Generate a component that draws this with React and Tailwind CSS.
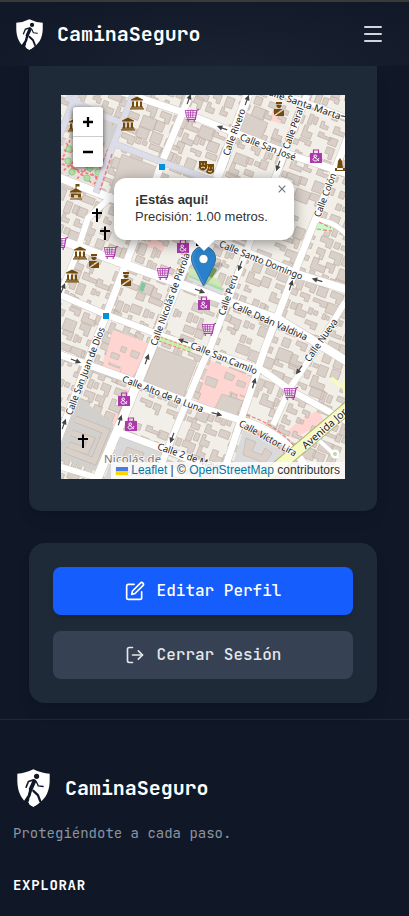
import React from "react";
import { FiEdit, FiLogOut } from "react-icons/fi";
import { Menu } from "lucide-react";

function Logo({ className }) {
  return (
    <svg viewBox="50 177 101 115" preserveAspectRatio="none" className={className}>
      <path fill="#fff" d="M100 178Q76 190 51 191L51 215C52 245 62 264 76 277L88 262L87 284Q93 289 100 291Q107 288 114 283L121 277C138 265 149 245 150 215L150 191Q124 190 100 178Z" />
      <g fill="none" stroke="#101828" strokeLinecap="round" strokeLinejoin="round">
        <circle cx="110" cy="199" r="4" strokeWidth="8" />
        <path d="M103 214L92 238" strokeWidth="12" />
        <path d="M101 210L85 215L78 232" strokeWidth="5" />
        <path d="M109 215L115 228L130 230" strokeWidth="4" />
        <path d="M92 240L87 258L75 276" strokeWidth="9" />
        <path d="M76 277L66 283" strokeWidth="4" />
        <path d="M100 243L114 256L121 274" strokeWidth="7" />
      </g>
      <path fill="#fff" d="M101 252L84 278Q92 287 100 291Q109 288 117 280Q112 262 101 252Z" />
    </svg>
  );
}

function makeBuildings() {
  let seed = 41;
  const rnd = () => {
    seed = (seed * 16807) % 2147483647;
    return seed / 2147483647;
  };
  const list = [];
  for (let r = -12; r < 36; r++) {
    for (let c = -4; c < 34; c++) {
      const a = rnd(), b = rnd(), d = rnd(), e = rnd(), k = rnd();
      if (k < 0.1) continue;
      const x = c * 14 + a * 3;
      const y = r * 12 + b * 3;
      const w = 7 + d * 8;
      const h = 5 + e * 7;
      if (k > 0.75) {
        list.push(`M${x} ${y}h${w}v${h}h${-w * 0.45}v${-h * 0.4}h${-w * 0.55}z`);
      } else if (k > 0.5) {
        list.push(`M${x} ${y}h${w * 0.4}v${h * 0.45}h${w * 0.6}v${h * 0.55}h${-w}z`);
      } else if (k > 0.35) {
        list.push(`M${x} ${y}h${w * 0.45}v${h}h${-w * 0.45}zM${x + w * 0.6} ${y + 1}h${w * 0.4}v${h * 0.7}h${-w * 0.4}z`);
      } else {
        list.push(`M${x} ${y}h${w}v${h}h${-w}z`);
      }
    }
  }
  return list.join("");
}
const BUILDINGS = makeBuildings();

const ROADS = [
  ["M248 95L217 178L193 245L152 347L127 408L97 479", 9],
  ["M190 95L162 162L133 245L107 313L92 350L75 395L58 440", 7],
  ["M307 95L275 178L250 242L210 348L202 365L165 455L156 479", 6.5],
  ["M350 132L315 220L265 348L225 468L221 479", 7],
  ["M345 302L317 348L290 388L273 425", 6],
  ["M122 92L182 112L220 127L297 157L348 174", 7],
  ["M58 177L98 193L150 213L217 240L300 275L348 290", 8],
  ["M58 239L127 265L175 282L205 293L280 320L348 362", 8.5],
  ["M58 294L107 315L165 337L240 362L262 370L290 390L348 422", 6.5],
  ["M58 354L125 378L203 408L240 420Q275 428 300 458L312 475", 7],
  ["M118 432L172 452L236 480", 7],
  ["M58 466L98 478", 6],
  ["M268 90L300 100L348 118", 5],
  ["M315 220Q333 220 347 235", 5],
  ["M311 433L335 455", 4],
  ["M113 195L88 218L75 258L61 292", 6],
];
const PLAZA_ROADS = ["M76 95L58 140", "M133 95L115 140L96 193", "M66 97L98 114L122 123", "M115 144L162 162L205 178L240 190", "M190 277L223 292"];

const LABELS = [
  ["Calle Santa Marta", 302, 103, 19, 82],
  ["Calle Rivero", 234, 132, -70, 49],
  ["Calle Peral", 293, 128, -70, 44],
  ["Calle San José", 268, 147, 21, 59],
  ["Calle Colón", 325, 195, -69, 46],
  ["Calle Santo Domingo", 261, 260, 22, 89],
  ["Calle Perú", 228, 295, -71, 42],
  ["Calle Deán Valdivia", 270, 321, 24, 81],
  ["Calle Nicolás de Piérola", 170, 299, -70, 98],
  ["Calle San Juan de Dios", 85, 371, -69, 93],
  ["Calle San Camilo", 224, 358, 22, 71],
  ["Calle Alto de la Luna", 163, 394, 21, 86],
  ["Calle 2 de Mayo", 190, 457, 19, 68],
  ["Calle Nueva", 321, 340, -55, 50],
];

const ARROWS = [
  [247, 100, -70], [189, 99, -70], [222, 128, 200], [278, 166, 110], [346, 117, 15],
  [240, 266, 110], [317, 280, 197], [291, 285, -72], [200, 291, 22], [183, 341, 200],
  [63, 288, -68], [76, 361, 22], [147, 359, -70], [120, 420, -72], [64, 424, -70],
  [172, 438, 110], [254, 383, -74], [299, 370, 125], [217, 414, 15],
];

function Museum({ x, y }) {
  return (
    <g transform={`translate(${x - 7} ${y - 6.5})`} fill="#734a08">
      <path d="M7 0L13 3V4H1V3ZM2 5h2v5H2zM6 5h2v5H6zM10 5h2v5h-2zM1 10h12v1.3H1zM0 11.7h14V13H0z" />
    </g>
  );
}
function Cart({ x, y }) {
  return (
    <g transform={`translate(${x - 7} ${y - 6})`}>
      <path d="M0 1.5H11.5L10.300 8.500H1.500Z" fill="#fff" opacity=".6" />
      <g fill="none" stroke="#ac39ac" strokeWidth=".8">
        <path d="M0 1.500H12M.5 3.800H11.500M1 6.100H11M1.500 8.400H10.500M.3 1.500L1.600 8.400M3 1.500L3.500 8.400M5.500 1.500V8.400M8 1.500L7.700 8.400" />
        <path d="M14 .3L12 1.200L10.300 10.300H1.500" strokeWidth="1.200" />
        <path d="M2.500 12h1.500M8.500 12h1.500" strokeWidth="1.500" />
      </g>
    </g>
  );
}
function Bag({ x, y }) {
  return (
    <g transform={`translate(${x} ${y})`}>
      <path d="M-2.5 -2.5V-6H2.5V-2.5" fill="none" stroke="#ac39ac" strokeWidth="1.2" />
      <path d="M-6 -3H6V7H-6Z" fill="#ac39ac" />
      <circle cx="-.8" cy=".2" r="1.3" fill="none" stroke="#fff" />
      <path d="M-.5 1.5C-4 2-3.5 5-.8 5C1 5 2 4 3 2M-1.5 1L3 5" fill="none" stroke="#fff" />
    </g>
  );
}
function Officer({ x, y }) {
  return (
    <g transform={`translate(${x} ${y})`} fill="#734a08">
      <path d="M-3 -7H3V-5H-3ZM-2.500 -4.200H2.500V-2.500Q0 .8-2.500-2.500ZM-5 0H3.500L-5 6ZM5 1V7H-4Z" />
    </g>
  );
}
function Cross({ x, y }) {
  return <path d={`M${x} ${y - 6.5}V${y + 7}M${x - 5} ${y - 2}H${x + 5}`} stroke="#000" strokeWidth="2" />;
}

function MapTiles() {
  return (
    <svg viewBox="61 95 284 384" className="block h-[384px] w-[284px]" style={{ fontFamily: '"Noto Sans", sans-serif' }}>
      <rect x="61" y="95" width="284" height="384" fill="#f2efe9" />
      <g fill="#ffd5d1">
        <path d="M112 329L148 343L131 384L100 372Z" />
        <path d="M208 361L253 378L240 420L196 402Z" />
        <path d="M300 420L318 410L325 422L295 438L283 435Z" />
        <path d="M125 388L130 390L118 425L111 422Z" />
        <path d="M152 238L166 242L163 252L142 245Z" />
        <path d="M274 108L285 111L281 124L269 120Z" />
      </g>
      <g transform="translate(61 95) rotate(21)">
        <path d={BUILDINGS} fill="#d9d0c9" stroke="#c2b3a9" strokeWidth=".7" />
      </g>
      <g fill="#d9d0c9" stroke="#c2b3a9" strokeWidth=".6">
        <path d="M157 347L197 362L183 398L143 384Z" />
        <path d="M122 154L157 167L148 205L108 197Z" />
        <path d="M246 113L268 123L258 146L237 137Z" />
      </g>
      <g fill="#ffd5d1">
        <path d="M113 330L148 343L142 358L136 372L128 382L119 378L122 367L105 360Z" />
        <path d="M211 361L252 377L246 396L230 391L224 413L199 403L207 385L202 382Z" />
      </g>
      <g fill="#d9d0c9" stroke="#c2b3a9" strokeWidth=".6">
        <path d="M222 394L243 401L236 417L214 410ZM207 376L218 380L215 388L205 384ZM132 350L140 353L137 359L130 356ZM122 346L127 348L125 353L120 351ZM226 372L235 376L232 381L224 378ZM112 352L120 355L118 360L110 357ZM238 380L246 383L244 388L236 385Z" />
      </g>
      <path d="M77 396L114 424L98 472L61 458V436Z" fill="#d1d0cd" />
      <g fill="none" stroke="#c2b3a9" strokeWidth="7">
        <path d="M75 419L106 431L94 461L65 450M72 433L91 440L86 451L69 445" />
      </g>
      <g fill="none" stroke="#d9d0c9" strokeWidth="5.8">
        <path d="M75 419L106 431L94 461L65 450M72 433L91 440L86 451L69 445" />
      </g>
      <path d="M121 435L168 452L155 479H104Z" fill="#d8d8d8" />
      <path d="M244 428Q270 437 288 456L268 473H230Z" fill="#dadada" />
      <path d="M246 438L256 442L252 451L262 455L265 448L272 453L265 463L243 455ZM127 447L144 453L140 464L123 458Z" fill="#d9d0c9" stroke="#c2b3a9" strokeWidth=".6" />
      <path d="M66 138L107 148L95 186L61 173V151Z" fill="#e5e1dc" />
      <path d="M104 122L117 127L110 144L97 139Z" fill="#cfd0cf" />
      <g stroke="#f87974" strokeWidth="1.6" strokeDasharray="3 2" fill="none">
        <path d="M66 143L101 184M62 158L93 184M76 141L104 172M92 145L62 172M103 151L75 181M108 149L93 188M64 150L104 162M62 164L100 178M70 140L62 160M84 144L68 176" />
      </g>
      <g fill="#aedfa3" stroke="#83bb7c" strokeWidth=".6">
        {[[69, 149], [79, 145], [91, 150], [98, 158], [68, 161], [79, 160], [90, 168], [72, 172], [87, 178], [98, 172]].map(([x, y]) => (
          <circle key={`${x}-${y}`} cx={x} cy={y} r="3.2" />
        ))}
      </g>
      <path d="M142 282L146 284L143 292L139 290Z" fill="#7fc8a2" />
      <path d="M318 221L336 225L331 232L315 230Z" fill="#c8facc" />
      <path d="M190 268L218 279L224 291L188 279Z" fill="#cdebb0" />
      <path d="M214 267L217 270L212 278L207 275Z" fill="#8db56e" />
      <g fill="none" stroke="#cfc8c2" strokeLinejoin="round">
        {ROADS.map(([d, w]) => <path key={d} d={d} strokeWidth={w + 1} />)}
      </g>
      <g fill="none" stroke="#fff" strokeLinejoin="round">
        {ROADS.map(([d, w]) => <path key={d} d={d} strokeWidth={w} />)}
      </g>
      <g fill="none" stroke="#c8c7d0" strokeLinejoin="round">
        {PLAZA_ROADS.map((d) => <path key={d} d={d} strokeWidth="7" />)}
      </g>
      <g fill="none" stroke="#dddde8" strokeLinejoin="round">
        {PLAZA_ROADS.map((d) => <path key={d} d={d} strokeWidth="6" />)}
      </g>
      <path d="M112 154L100 190" stroke="#f87974" strokeWidth="1.5" strokeDasharray="4 2" />
      <path d="M189 276L223 290" stroke="#a6e09a" strokeWidth="2" />
      <path d="M159 338L192 350" stroke="#c8efb0" strokeWidth="5" />
      <path d="M160 337L193 349M159 341L190 352" stroke="#f87974" strokeDasharray="3 2" />
      <path d="M246 415Q275 423 297 449M240 427Q265 434 287 455M317 229L332 231M319 222L331 228" fill="none" stroke="#f87974" strokeDasharray="4 2" strokeWidth="1.2" />
      <path d="M350 406L260 482" stroke="#aab36a" strokeWidth="13" />
      <path d="M350 406L260 482" stroke="#f7fabf" strokeWidth="11" />
      <path d="M331 378L347 390M345 378V396" stroke="#f7fabf" strokeWidth="4" />
      <circle cx="335" cy="454" r="4.5" fill="#fff" />
      <circle cx="335" cy="454" r="2" fill="#b8d8a8" />
      <g fill="none" stroke="#444" strokeWidth="1.2">
        {ARROWS.map(([x, y, a]) => (
          <g key={`${x}-${y}`} transform={`translate(${x} ${y}) rotate(${a})`}>
            <path d="M-5.5 0H2" />
            <path d="M5.5 0L0 -2.6V2.6Z" fill="#444" stroke="none" />
          </g>
        ))}
      </g>
      <Museum x={137} y={103} />
      <Museum x={128} y={124} />
      <Museum x={75} y={125} />
      <Museum x={80} y={253} />
      <Museum x={72} y={276} />
      <g fill="#734a08">
        <path d="M75.500 184h4v2.500h-3v2l5 3v1H70v-1l5.500-3ZM71 193.500h10v4h-3v-2.500h-4v2.500h-3zM70 198.500h12v1H70zM337 170h6v-1l-1-8-2-3-2 3-1 8ZM335 168h10v3h-10Z" />
        <path d="M199 161h8v7q-4 5-8 0ZM207 164h7v8q-4 4-8 0l2-4Z" />
        <path d="M201 164h1M204 164h1M201 168q2-2 4 0M209 168h1M212 168h1M208 171q2 2 4 0" stroke="#f2efe9" fill="none" />
      </g>
      {[[192, 115], [61, 243], [111, 252], [164, 273], [209, 329], [291, 393]].map(([x, y]) => <Cart key={x} x={x} y={y} />)}
      {[[316, 156], [183, 246], [204, 303], [124, 399], [131, 424]].map(([x, y]) => <Bag key={x} x={x} y={y} />)}
      <Officer x={279} y={109} />
      <Officer x={94} y={261} />
      <Officer x={126} y={279} />
      <Cross x={97} y={215} />
      <Cross x={105} y={233} />
      <Cross x={83} y={441} />
      <path d="M159 164h6v6h-6zM103 313h6v6h-6z" fill="#0092da" />
      <path d="M196 246h7v-3h-7z" fill="#000" />
      <g fontSize="9.6" fill="#222" stroke="#fff" strokeWidth="2" strokeOpacity=".75" strokeLinejoin="round" paintOrder="stroke" textAnchor="middle">
        {LABELS.map(([t, x, y, a, w]) => (
          <text key={t} transform={`translate(${x} ${y}) rotate(${a})`} y="3.5" textLength={w} lengthAdjust="spacingAndGlyphs">{t}</text>
        ))}
        <text transform="translate(268 438) rotate(29)" y="3.5" textLength="64" lengthAdjust="spacingAndGlyphs">Calle Víctor Lira</text>
        <text textAnchor="start" transform="translate(305 449) rotate(-41)" y="1" fontSize="10.5">Avenida Jorge</text>
      </g>
      <g fontSize="11.3" fill="#777" stroke="#fff" strokeWidth="2" strokeOpacity=".8" paintOrder="stroke" textAnchor="middle">
        <text x="132.500" y="463" textLength="57">Nicolás de</text>
        <text x="132.500" y="476">Piérola</text>
      </g>
    </svg>
  );
}

function MapPanel() {
  return (
    <div className="relative h-[384px] w-[284px] overflow-hidden font-['Liberation_Sans',sans-serif]">
      <MapTiles />
      <svg viewBox="0 0 25 41" className="absolute left-[130px] top-[151px] h-[41px] w-[25px] overflow-visible">
        <path d="M13 41L30 22Q34 17 28 16L19 20Z" fill="#000" opacity=".18" />
        <path d="M12.500 .5C5.500 .5 .5 5.500 .5 12.500C.5 16 2 19.500 4 23L12.500 40L21 23C23 19.500 24.500 16 24.500 12.500C24.500 5.500 19.500 .5 12.500 .5Z" fill="#2a81cb" stroke="#2e6c97" />
        <path d="M12.500 1.700C6.200 1.700 1.700 6.200 1.700 12.500C1.700 16 3 19 5 22.500L12.500 37.500" fill="none" stroke="#5aa0da" opacity=".7" />
        <circle cx="12.500" cy="13" r="4.600" fill="#fff" stroke="#2e6c97" strokeWidth=".8" />
      </svg>
      <div className="absolute left-3 top-3 flex w-[30px] flex-col overflow-hidden rounded-[3px] shadow-[0_1px_5px_rgba(0,0,0,0.65)]">
        <button className="flex h-[30px] items-center justify-center border-b border-[#ccc] bg-white">
          <svg viewBox="0 0 12 12" className="size-3"><path d="M6 1V11M1 6H11" stroke="#000" strokeWidth="2.300" /></svg>
        </button>
        <button className="flex h-[30px] items-center justify-center bg-white">
          <svg viewBox="0 0 12 12" className="size-3"><path d="M1 6H11" stroke="#000" strokeWidth="2.300" /></svg>
        </button>
      </div>
      <div className="absolute left-[53px] top-[83px] h-[62px] w-[180px] rounded-xl bg-white pl-[21px] pt-[13px] text-[13px] leading-[17px] text-[#333] shadow-[0_3px_14px_rgba(0,0,0,0.4)]">
        <p className="font-bold">¡Estás aquí!</p>
        <p>Precisión: 1.00 metros.</p>
        <svg viewBox="0 0 8 8" className="absolute right-2 top-[7px] size-2"><path d="M.7 .7L7.300 7.300M7.300 .7L.7 7.300" stroke="#757575" strokeWidth="1.200" /></svg>
      </div>
      <svg viewBox="0 0 24 12" className="absolute left-[131px] top-[144px] h-3 w-6"><path d="M0 0H24L12 12Z" fill="#fff" /></svg>
      <div className="absolute bottom-0 right-0 flex h-[17px] items-center whitespace-pre bg-white/80 px-[5px] text-[12px] leading-[17px] text-[#333]">
        <svg viewBox="0 0 12 8" className="mr-[3px] h-2 w-3"><path fill="#4C7BE1" d="M0 0h12v4H0z" /><path fill="#FFD500" d="M0 4h12v4H0z" /></svg>
        <span className="text-[#0078a8]">Leaflet</span>
        <span> | © </span>
        <span className="text-[#0078a8]">OpenStreetMap</span>
        <span> contributors</span>
      </div>
    </div>
  );
}

export default function App() {
  return (
    <div className="h-[916px] w-full overflow-hidden bg-[#101828] font-['JetBrains_Mono','DejaVu_Sans_Mono',monospace] text-white">
      <header className="flex h-[66px] items-center justify-between border-t-2 border-[#3a3a3a] bg-[radial-gradient(ellipse_at_55%_100%,#1b2231_0%,#151c2b_50%,#111928_85%)] pl-4 pr-6">
        <div className="flex items-center">
          <Logo className="h-[31px] w-[27px]" />
          <span className="ml-[14px] text-[20px] font-bold leading-7 tracking-[-0.04px]">CaminaSeguro</span>
        </div>
        <Menu className="size-6 text-gray-300" strokeWidth={2} />
      </header>

      <main className="flex flex-col gap-8 pl-[29px]">
        <section className="h-[445px] w-[348px] rounded-b-xl bg-[#1f2a38] px-8 pt-[29px] shadow-lg">
          <MapPanel />
        </section>
        <section className="flex h-[160px] w-[348px] flex-col gap-4 rounded-2xl bg-[#1f2a38] p-6 shadow-lg">
          <button className="flex h-12 items-center justify-center gap-3 rounded-lg bg-[#155dfc] text-[16px] font-medium shadow-md">
            <FiEdit className="size-5" />
            <span>Editar Perfil</span>
          </button>
          <button className="flex h-12 items-center justify-center gap-3 rounded-lg bg-[#364153] text-[16px] font-medium text-gray-200">
            <FiLogOut className="size-5" />
            <span>Cerrar Sesión</span>
          </button>
        </section>
      </main>

      <footer className="mt-4 border-t border-[#1e2939] pl-[13px] pt-12">
        <div className="flex h-10 items-center pl-1">
          <Logo className="h-[38px] w-[33px]" />
          <span className="ml-[15px] text-[20px] font-bold leading-7 tracking-[-0.04px]">CaminaSeguro</span>
        </div>
        <p className="mt-[15px] text-[14px] leading-5 text-[#8b93a1]">Protegiéndote a cada paso.</p>
        <h3 className="mt-8 text-[14px] font-bold leading-5 tracking-[0.7px]">EXPLORAR</h3>
      </footer>
    </div>
  );
}
